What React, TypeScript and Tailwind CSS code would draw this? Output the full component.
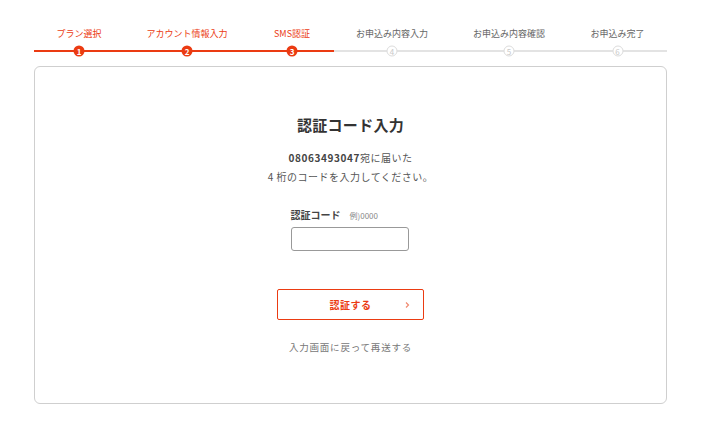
const steps = [
  { label: 'プラン選択', w: 'w-[90px]', done: true },
  { label: 'アカウント情報入力', w: 'w-[126px]', done: true },
  { label: 'SMS認証', w: 'w-[84px]', done: true },
  { label: 'お申込み内容入力', w: 'w-[116px]', done: false },
  { label: 'お申込み内容確認', w: 'w-[118px]', done: false },
  { label: 'お申込み完了', w: 'w-[99px]', done: false },
];

function StepBar() {
  return (
    <div className="flex">
      {steps.map((s, i) => (
        <div key={i} className={`${s.w} flex flex-col items-center`}>
          <span
            className={`text-[9px] leading-none pt-[29px] h-[50px] ${
              s.done ? 'text-[#eb3b12]' : 'text-[#666]'
            }`}
          >
            {s.label}
          </span>
          <div className="relative w-full h-[2px]">
            <div className={`h-[2px] w-full ${s.done ? 'bg-[#eb3b12]' : 'bg-[#e3e3e3]'}`} />
            <span
              className={`absolute left-1/2 top-1/2 -translate-x-1/2 -translate-y-1/2 w-[11px] h-[11px] rounded-full grid place-items-center text-[8px] font-bold leading-none ${
                s.done
                  ? 'bg-[#eb3b12] text-white'
                  : 'bg-white border border-[#dcdcdc] text-[#c8c8c8] font-normal'
              }`}
            >
              {i + 1}
            </span>
          </div>
        </div>
      ))}
    </div>
  );
}

export default function App() {
  return (
    <div className="w-[713px] h-[443px] bg-white font-['Noto_Sans_CJK_JP','Noto_Sans',sans-serif] text-[#333]">
      <div className="pl-[34px] w-[667px]">
        <StepBar />
        <div className="mt-[14px] h-[338px] border border-[#cfcfcf] rounded-[6px] flex flex-col items-center">
          <h1 className="mt-[50px] text-[15px] font-bold leading-none tracking-[0.3px]">認証コード入力</h1>
          <p className="mt-[16px] text-[10px] leading-[19px] text-[#555] text-center tracking-[0.5px]">
            <span className="font-bold text-[#444] tracking-[0.6px]">08063493047</span>宛に届いた
            <br />4 桁のコードを入力してください。
          </p>
          <div className="mt-[24px] w-[118px] ml-[-2px]">
            <div className="flex items-baseline gap-[9px] leading-none">
              <span className="text-[10px] font-bold text-[#444]">認証コード</span>
              <span className="text-[8px] text-[#888]">例)0000</span>
            </div>
            <input className="mt-[7px] w-[118px] h-[24px] border border-[#999] rounded-[3px] outline-none px-2 text-[11px]" />
          </div>
          <button className="mt-[38px] w-[147px] h-[31px] border border-[#eb3b12] rounded-[2px] relative flex items-center justify-center">
            <span className="text-[10px] font-bold text-[#eb3b12] tracking-[0.5px]">認証する</span>
            <svg
              className="absolute right-[13px] top-1/2 -translate-y-1/2"
              width="5"
              height="7"
              viewBox="0 0 5 7"
              fill="none"
            >
              <path d="M1 1l2.5 2.5L1 6" stroke="#f08a70" strokeWidth="1.2" />
            </svg>
          </button>
          <a className="mt-[23px] text-[9.5px] text-[#777] tracking-[0.8px] leading-none">入力画面に戻って再送する</a>
        </div>
      </div>
    </div>
  );
}
